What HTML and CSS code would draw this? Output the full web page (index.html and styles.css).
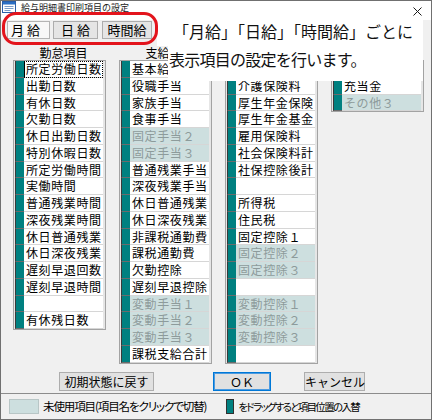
FILE: index.html
```html
<!DOCTYPE html>
<html lang="ja">
<head>
<meta charset="utf-8">
<title>給与明細書印刷項目の設定</title>
<link rel="stylesheet" href="styles.css">
</head>
<body>
<div class="window">
  <div class="titlebar">
    <svg class="app-icon" width="14" height="12" viewBox="0 0 14 12">
      <rect x="0.5" y="0.5" width="13" height="11" fill="#ffffff" stroke="#2b5fa8"/>
      <rect x="1" y="1" width="12" height="2.5" fill="#2b6fc4"/>
      <rect x="2.5" y="5" width="9" height="1" fill="#7a9cc8"/>
      <rect x="2.5" y="7" width="9" height="1" fill="#7a9cc8"/>
      <rect x="2.5" y="9" width="6" height="1" fill="#7a9cc8"/>
    </svg>
    <span class="title">給与明細書印刷項目の設定</span>
    <svg class="close" width="9" height="9" viewBox="0 0 9 9">
      <path d="M0.5 0.5 L8.5 8.5 M8.5 0.5 L0.5 8.5" stroke="#1a1a1a" stroke-width="1"/>
    </svg>
  </div>

  <div class="tabs">
    <div class="tab tab-on">月 給</div>
    <div class="tab tab-day">日 給</div>
    <div class="tab tab-hour">時間給</div>
  </div>

  <div class="columns">
    <div class="col">
      <div class="col-head">勤怠項目</div>
      <div class="list">
        <div class="row"><span class="grip"></span><span class="cell focus">所定労働日数</span></div>
        <div class="row"><span class="grip"></span><span class="cell">出勤日数</span></div>
        <div class="row"><span class="grip"></span><span class="cell">有休日数</span></div>
        <div class="row"><span class="grip"></span><span class="cell">欠勤日数</span></div>
        <div class="row"><span class="grip"></span><span class="cell">休日出勤日数</span></div>
        <div class="row"><span class="grip"></span><span class="cell">特別休暇日数</span></div>
        <div class="row"><span class="grip"></span><span class="cell">所定労働時間</span></div>
        <div class="row"><span class="grip"></span><span class="cell">実働時間</span></div>
        <div class="row"><span class="grip"></span><span class="cell">普通残業時間</span></div>
        <div class="row"><span class="grip"></span><span class="cell">深夜残業時間</span></div>
        <div class="row"><span class="grip"></span><span class="cell">休日普通残業</span></div>
        <div class="row"><span class="grip"></span><span class="cell">休日深夜残業</span></div>
        <div class="row"><span class="grip"></span><span class="cell">遅刻早退回数</span></div>
        <div class="row"><span class="grip"></span><span class="cell">遅刻早退時間</span></div>
        <div class="row"><span class="grip"></span><span class="cell"></span></div>
        <div class="row"><span class="grip"></span><span class="cell">有休残日数</span></div>
      </div>
    </div>

    <div class="col">
      <div class="col-head">支給項目</div>
      <div class="list">
        <div class="row"><span class="grip"></span><span class="cell">基本給</span></div>
        <div class="row"><span class="grip"></span><span class="cell">役職手当</span></div>
        <div class="row"><span class="grip"></span><span class="cell">家族手当</span></div>
        <div class="row"><span class="grip"></span><span class="cell">食事手当</span></div>
        <div class="row"><span class="grip"></span><span class="cell off">固定手当２</span></div>
        <div class="row"><span class="grip"></span><span class="cell off">固定手当３</span></div>
        <div class="row"><span class="grip"></span><span class="cell">普通残業手当</span></div>
        <div class="row"><span class="grip"></span><span class="cell">深夜残業手当</span></div>
        <div class="row"><span class="grip"></span><span class="cell">休日普通残業</span></div>
        <div class="row"><span class="grip"></span><span class="cell">休日深夜残業</span></div>
        <div class="row"><span class="grip"></span><span class="cell">非課税通勤費</span></div>
        <div class="row"><span class="grip"></span><span class="cell">課税通勤費</span></div>
        <div class="row"><span class="grip"></span><span class="cell">欠勤控除</span></div>
        <div class="row"><span class="grip"></span><span class="cell">遅刻早退控除</span></div>
        <div class="row"><span class="grip"></span><span class="cell off">変動手当１</span></div>
        <div class="row"><span class="grip"></span><span class="cell off">変動手当２</span></div>
        <div class="row"><span class="grip"></span><span class="cell off">変動手当３</span></div>
        <div class="row"><span class="grip"></span><span class="cell">課税支給合計</span></div>
      </div>
    </div>

    <div class="col">
      <div class="col-head">控除項目</div>
      <div class="list">
        <div class="row"><span class="grip"></span><span class="cell">健康保険料</span></div>
        <div class="row"><span class="grip"></span><span class="cell">介護保険料</span></div>
        <div class="row"><span class="grip"></span><span class="cell">厚生年金保険</span></div>
        <div class="row"><span class="grip"></span><span class="cell">厚生年金基金</span></div>
        <div class="row"><span class="grip"></span><span class="cell">雇用保険料</span></div>
        <div class="row"><span class="grip"></span><span class="cell">社会保険料計</span></div>
        <div class="row"><span class="grip"></span><span class="cell">社保控除後計</span></div>
        <div class="row"><span class="grip"></span><span class="cell"></span></div>
        <div class="row"><span class="grip"></span><span class="cell">所得税</span></div>
        <div class="row"><span class="grip"></span><span class="cell">住民税</span></div>
        <div class="row"><span class="grip"></span><span class="cell">固定控除１</span></div>
        <div class="row"><span class="grip"></span><span class="cell off">固定控除２</span></div>
        <div class="row"><span class="grip"></span><span class="cell off">固定控除３</span></div>
        <div class="row"><span class="grip"></span><span class="cell"></span></div>
        <div class="row"><span class="grip"></span><span class="cell off">変動控除１</span></div>
        <div class="row"><span class="grip"></span><span class="cell off">変動控除２</span></div>
        <div class="row"><span class="grip"></span><span class="cell off">変動控除３</span></div>
        <div class="row"><span class="grip"></span><span class="cell"></span></div>
      </div>
    </div>

    <div class="col">
      <div class="col-head">その他項目</div>
      <div class="list">
        <div class="row"><span class="grip"></span><span class="cell">差引支給額</span></div>
        <div class="row"><span class="grip"></span><span class="cell">充当金</span></div>
        <div class="row"><span class="grip"></span><span class="cell off">その他３</span></div>
      </div>
    </div>
  </div>

  <div class="btns">
    <div class="btn btn-reset">初期状態に戻す</div>
    <div class="btn btn-ok">ＯＫ</div>
    <div class="btn btn-cancel">キャンセル</div>
  </div>

  <div class="legend">
    <span class="swatch-off"></span>
    <span class="legend-text">未使用項目(項目名をクリックで切替)</span>
    <span class="swatch-grip"></span>
    <span class="legend-text legend-text-drag">をドラッグすると項目位置の入替</span>
  </div>

  <div class="callout">
    <div class="callout-l1">「月給」「日給」「時間給」ごとに</div>
    <div class="callout-l2">表示項目の設定を行います。</div>
  </div>
  <div class="highlight"></div>
</div>
</body>
</html>
```

FILE: styles.css
```css
html, body {
  margin: 0;
  padding: 0;
  background: #f0f0f0;
}

.window {
  position: relative;
  width: 432px;
  height: 420px;
  box-sizing: border-box;
  border: 1px solid #707070;
  background: #f0f0f0;
  font-family: "Noto Sans CJK JP", "Noto Sans", sans-serif;
  color: #000;
  overflow: hidden;
}

/* title bar */
.titlebar {
  height: 19px;
  background: #ffffff;
  display: flex;
  align-items: flex-start;
}
.app-icon {
  margin: 0 0 0 1px;
  flex: none;
}
.title {
  margin-left: 5px;
  margin-top: 1px;
  font-size: 9px;
  line-height: 11px;
  color: #222;
  white-space: nowrap;
}
.close {
  margin-left: auto;
  margin-right: 9px;
  margin-top: 6px;
  flex: none;
}

/* tabs */
.tabs {
  display: flex;
  margin-top: 1px;
  padding-left: 6px;
  height: 18px;
  gap: 3px;
}
.tab {
  height: 18px;
  box-sizing: border-box;
  border: 1px solid #adadad;
  background: #e5e5e5;
  font-size: 13px;
  line-height: 16px;
  text-align: center;
  white-space: pre;
}
.tab-on {
  width: 43px;
  background: #f8f8f8;
  border-color: #b4b4b4;
  padding-right: 6px;
}
.tab-day { width: 45px; }
.tab-hour { width: 50px; margin-left: 1px; }

/* columns */
.columns {
  display: flex;
  align-items: flex-start;
  gap: 13px;
  padding-left: 12px;
  margin-top: 6px;
  height: 318.5px;
}
.col {
  width: 93px;
  flex: none;
}
.col-head {
  height: 15px;
  font-size: 12px;
  line-height: 15px;
  text-align: center;
  padding-left: 8px;
  white-space: nowrap;
}
.list {
  border: 1px solid #a3a3a3;
  background: #e6e6e6;
  padding-left: 1px;
  padding-right: 2px;
}
.row {
  display: flex;
  height: 16.75px;
}
.grip {
  flex: none;
  width: 9px;
  box-sizing: border-box;
  background: #008080;
  border-left: 1px solid #3a3a3a;
  border-bottom: 1px solid #6b6b6b;
}
.cell {
  flex: 1;
  min-width: 0;
  box-sizing: border-box;
  background: #ffffff;
  border-bottom: 1px solid #d6d6d6;
  padding-left: 2px;
  font-size: 12px;
  line-height: 15.5px;
  letter-spacing: 0.6px;
  white-space: nowrap;
  overflow: hidden;
}
.cell.off {
  background: #cddfdf;
  color: #8d9b9b;
}
.cell.focus {
  outline: 1px dotted #000;
  outline-offset: -1px;
  border-left: 1px solid #000;
  padding-left: 1px;
}

/* buttons */
.btns {
  display: flex;
  height: 19px;
  margin-top: 8.5px;
  padding-left: 58px;
}
.btn {
  box-sizing: border-box;
  height: 19px;
  border: 1px solid #adadad;
  background: #e1e1e1;
  font-size: 12px;
  line-height: 17px;
  text-align: center;
  white-space: nowrap;
}
.btn-reset { width: 95px; }
.btn-ok {
  width: 58px;
  margin-left: 59px;
  border-color: #0078d7;
  box-shadow: inset 0 0 0 1px #4c9be0;
}
.btn-cancel {
  width: 61px;
  margin-left: 33px;
}

/* legend */
.legend {
  margin-top: 2px;
  height: 25px;
  box-sizing: border-box;
  border-top: 1px solid #8c8c8c;
  display: flex;
  align-items: center;
  padding-left: 8px;
}
.swatch-off {
  width: 30px;
  height: 15px;
  box-sizing: border-box;
  background: #cddfdf;
  border: 1px solid #b8c6c6;
  flex: none;
}
.swatch-grip {
  width: 8px;
  height: 15px;
  box-sizing: border-box;
  background: #008080;
  border: 1px solid #303030;
  flex: none;
  margin-left: 20px;
}
.legend-text {
  font-size: 11.5px;
  line-height: 15px;
  letter-spacing: -1.1px;
  font-feature-settings: "palt";
  margin-left: 4px;
  white-space: nowrap;
}
.legend-text-drag {
  font-size: 10.5px;
  letter-spacing: -1.7px;
}

/* overlays */
.callout {
  position: absolute;
  left: 156px;
  top: 19px;
  width: 266px;
  height: 61px;
  background: #ffffff;
  clip-path: polygon(0 0, 100% 0, 100% 100%, 11px 100%, 11px 26px, 0 26px);
  font-size: 16px;
  line-height: 20px;
  color: #111;
  white-space: nowrap;
}
.callout-l1 {
  padding-left: 16px;
  margin-top: 1px;
}
.callout-l2 {
  padding-left: 12px;
  margin-top: 8px;
  letter-spacing: -0.75px;
}
.highlight {
  position: absolute;
  left: 1px;
  top: 11px;
  width: 156px;
  height: 33px;
  box-sizing: border-box;
  border: 3px solid #e3141c;
  border-radius: 14px;
}
```
